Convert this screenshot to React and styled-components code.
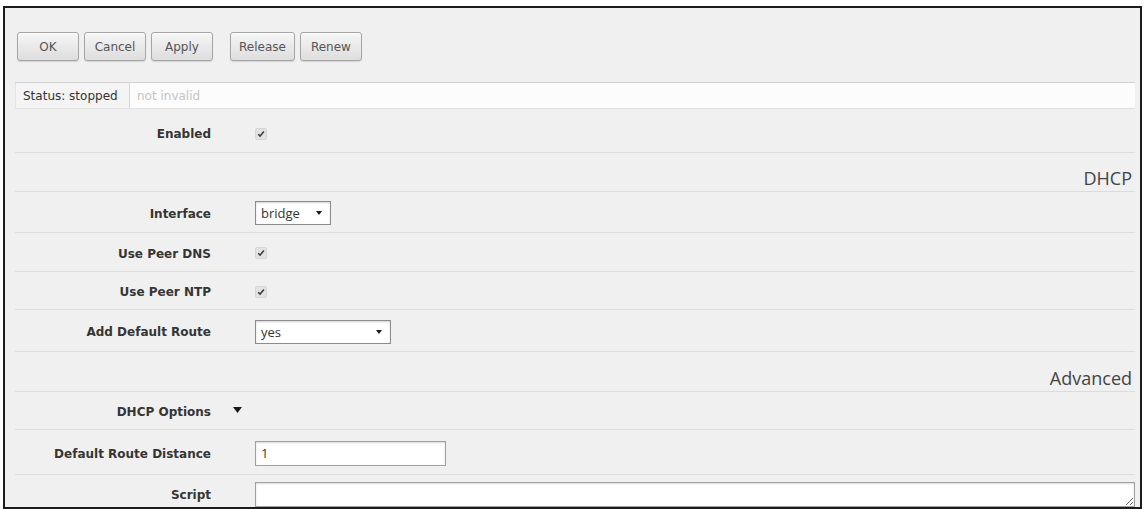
import React from "react";
import styled, { createGlobalStyle } from "styled-components";

const Global = createGlobalStyle`
  *, *::before, *::after { box-sizing: border-box; }
  html, body { margin: 0; padding: 0; background: #ffffff; }
  body { font-family: "DejaVu Sans", Verdana, sans-serif; }
`;

const Frame = styled.div`
  margin: 6px 0 0 3px;
  width: 1139px;
  height: 503px;
  border: 2px solid #1c1c1c;
  background: #f0f0f0;
  overflow: hidden;
`;

const Toolbar = styled.div`
  display: flex;
  align-items: flex-start;
  gap: 5px;
  height: 74px;
  padding: 24px 0 0 12px;
`;

const Button = styled.button`
  min-width: 62px;
  height: 29px;
  padding: 0 8px;
  margin-left: ${(p) => (p.$split ? "12px" : "0")};
  font-family: "DejaVu Sans", Verdana, sans-serif;
  font-size: 12px;
  color: #555555;
  background: linear-gradient(#f6f6f6, #dddddd);
  border: 1px solid #a6a6a6;
  border-radius: 3px;
  box-shadow: 0 1px 1px rgba(0, 0, 0, 0.12), inset 0 1px 0 #ffffff;
  cursor: pointer;
`;

const StatusBar = styled.div`
  display: flex;
  height: 27px;
  margin: 0 5px 0 10px;
  background: #fcfcfc;
  border-top: 1px solid #d2d2d2;
  border-bottom: 1px solid #e0e0e0;
  font-size: 12px;
`;

const StatusCell = styled.div`
  display: flex;
  align-items: center;
  width: 115px;
  padding-left: 7px;
  background: #f4f4f4;
  border-left: 1px solid #e4e4e4;
  border-right: 1px solid #d8d8d8;
  color: #333333;
`;

const StatusHint = styled.div`
  display: flex;
  align-items: center;
  padding-left: 7px;
  color: #c4c4c4;
`;

const Form = styled.div`
  margin: 4px 5px 0 10px;
`;

const Row = styled.div`
  display: grid;
  grid-template-columns: 196px 44px 1fr;
  align-items: center;
  height: ${(p) => p.$h}px;
  border-bottom: ${(p) => (p.$last ? "none" : "1px solid #dcdcdc")};
`;

const Label = styled.div`
  padding-top: 3px;
  text-align: right;
  font-size: 12px;
  font-weight: bold;
  color: #353535;
`;

const ToggleCell = styled.div`
  display: flex;
  align-items: center;
  padding-left: 22px;
  margin-top: -1px;
`;

const Value = styled.div`
  display: flex;
  align-items: center;
  min-width: 0;
  padding-top: 2px;
`;

const SectionRow = styled.div`
  display: flex;
  justify-content: flex-end;
  align-items: flex-end;
  height: ${(p) => p.$h}px;
  padding: 0 3px 4px 0;
  border-bottom: 1px solid #dcdcdc;
  font-family: "Open Sans", "Segoe UI", sans-serif;
  font-size: 18px;
  color: #444444;
  line-height: 1;
`;

const CheckBox = styled.span`
  display: inline-flex;
  align-items: center;
  justify-content: center;
  width: 12px;
  height: 12px;
  background: #e2e2e2;
  border: 1px solid #d6d6d6;
  border-radius: 2px;
`;

const SelectBox = styled.div`
  display: flex;
  align-items: center;
  justify-content: space-between;
  width: ${(p) => p.$w}px;
  height: 24px;
  padding: 0 8px 0 5px;
  background: #ffffff;
  border: 1px solid #8c8c8c;
  box-shadow: inset 0 1px 2px rgba(0, 0, 0, 0.18);
  font-family: "Open Sans", "Segoe UI", sans-serif;
  font-size: 13px;
  color: #333333;
`;

const TextInput = styled.input`
  width: ${(p) => (p.$w ? `${p.$w}px` : "100%")};
  height: 25px;
  padding: 0 5px;
  background: #ffffff;
  border: 1px solid #a0a0a0;
  box-shadow: inset 0 1px 2px rgba(0, 0, 0, 0.15);
  font-family: "Open Sans", "Segoe UI", sans-serif;
  font-size: 13px;
  color: #333333;
  outline: none;
`;

const TextArea = styled.textarea`
  display: block;
  width: 100%;
  height: 25px;
  padding: 2px 5px;
  background: #ffffff;
  border: 1px solid #a0a0a0;
  box-shadow: inset 0 1px 2px rgba(0, 0, 0, 0.15);
  font-family: "Open Sans", "Segoe UI", sans-serif;
  font-size: 13px;
  outline: none;
  resize: vertical;
`;

const Check = () => (
  <svg width="8" height="8" viewBox="0 0 8 8" aria-hidden="true">
    <path d="M1.2 4.2 L3.1 6.1 L6.9 1.6" fill="none" stroke="#3c3c3c" strokeWidth="1.5" />
  </svg>
);

const Caret = ({ size = 7 }) => (
  <svg width={size} height={Math.round(size * 0.65)} viewBox="0 0 10 6.5" aria-hidden="true">
    <path d="M0 0 H10 L5 6.5 Z" fill="#1a1a1a" />
  </svg>
);

const Select = ({ value, width }) => (
  <SelectBox $w={width}>
    <span>{value}</span>
    <Caret size={6} />
  </SelectBox>
);

const FieldRow = ({ label, h, toggle, last, children }) => (
  <Row $h={h} $last={last}>
    <Label>{label}</Label>
    <ToggleCell>{toggle}</ToggleCell>
    <Value>{children}</Value>
  </Row>
);

export default function App() {
  return (
    <>
      <Global />
      <Frame>
        <Toolbar>
          <Button>OK</Button>
          <Button>Cancel</Button>
          <Button>Apply</Button>
          <Button $split>Release</Button>
          <Button>Renew</Button>
        </Toolbar>

        <StatusBar>
          <StatusCell>Status: stopped</StatusCell>
          <StatusHint>not invalid</StatusHint>
        </StatusBar>

        <Form>
          <FieldRow label="Enabled" h={40}>
            <CheckBox><Check /></CheckBox>
          </FieldRow>

          <SectionRow $h={39}>DHCP</SectionRow>

          <FieldRow label="Interface" h={41}>
            <Select value="bridge" width={76} />
          </FieldRow>
          <FieldRow label="Use Peer DNS" h={39}>
            <CheckBox><Check /></CheckBox>
          </FieldRow>
          <FieldRow label="Use Peer NTP" h={38}>
            <CheckBox><Check /></CheckBox>
          </FieldRow>
          <FieldRow label="Add Default Route" h={42}>
            <Select value="yes" width={136} />
          </FieldRow>

          <SectionRow $h={40}>Advanced</SectionRow>

          <FieldRow label="DHCP Options" h={38} toggle={<Caret size={9} />} />
          <FieldRow label="Default Route Distance" h={45}>
            <TextInput $w={191} defaultValue="1" readOnly />
          </FieldRow>
          <FieldRow label="Script" h={36} last>
            <TextArea readOnly />
          </FieldRow>
        </Form>
      </Frame>
    </>
  );
}
